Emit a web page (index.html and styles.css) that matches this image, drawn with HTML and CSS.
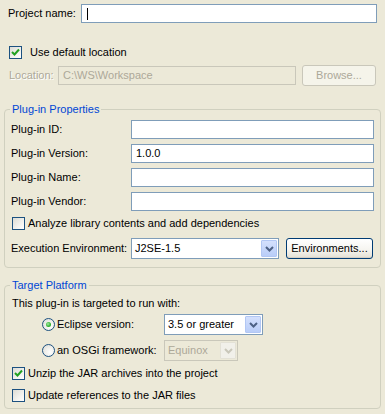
FILE: index.html
```html
<!DOCTYPE html>
<html>
<head>
<meta charset="utf-8">
<title>New Plug-in from Existing JAR Archives</title>
<link rel="stylesheet" href="styles.css">
</head>
<body>
<div class="top">
  <div class="row r-project">
    <span class="lbl-project">Project name:</span>
    <div class="field grow caret-host"><span class="caret"></span></div>
  </div>
  <div class="row r-default">
    <span class="check check-top checked"><svg viewBox="0 0 11 11" width="11" height="11"><polyline points="2,5 4.5,7.5 9,2.5" fill="none" stroke="#21a121" stroke-width="2"/></svg></span>
    <span class="ctext-wide">Use default location</span>
  </div>
  <div class="row r-location">
    <span class="lbl-location disabled-text">Location:</span>
    <div class="field field-disabled loc">C:\WS\Workspace</div>
    <div class="btn btn-disabled browse">Browse...</div>
  </div>
</div>

<fieldset class="group g1">
  <legend>Plug-in Properties</legend>
  <div class="row prop r-first">
    <span class="plbl">Plug-in ID:</span>
    <div class="field grow"></div>
  </div>
  <div class="row prop">
    <span class="plbl">Plug-in Version:</span>
    <div class="field grow">1.0.0</div>
  </div>
  <div class="row prop">
    <span class="plbl">Plug-in Name:</span>
    <div class="field grow"></div>
  </div>
  <div class="row prop">
    <span class="plbl">Plug-in Vendor:</span>
    <div class="field grow"></div>
  </div>
  <div class="row r-analyze">
    <span class="check"></span>
    <span class="ctext">Analyze library contents and add dependencies</span>
  </div>
  <div class="row r-exec">
    <span class="plbl">Execution Environment:</span>
    <div class="combo exec-combo">
      <span class="combo-text">J2SE-1.5</span>
      <span class="arrow"><svg viewBox="0 0 9 6" width="9" height="6"><polyline points="1,1 4.5,4.5 8,1" fill="none" stroke="#4d6185" stroke-width="2"/></svg></span>
    </div>
    <div class="btn btn-default envs">Environments...</div>
  </div>
</fieldset>

<fieldset class="group g2">
  <legend>Target Platform</legend>
  <div class="row r-intro">This plug-in is targeted to run with:</div>
  <div class="row r-eclipse">
    <span class="radio selected"><span class="dot"></span></span>
    <span class="rtext">Eclipse version:</span>
    <div class="combo eclipse-combo">
      <span class="combo-text">3.5 or greater</span>
      <span class="arrow"><svg viewBox="0 0 9 6" width="9" height="6"><polyline points="1,1 4.5,4.5 8,1" fill="none" stroke="#4d6185" stroke-width="2"/></svg></span>
    </div>
  </div>
  <div class="row r-osgi">
    <span class="radio"></span>
    <span class="rtext">an OSGi framework:</span>
    <div class="combo combo-disabled osgi-combo">
      <span class="combo-text">Equinox</span>
      <span class="arrow"><svg viewBox="0 0 9 6" width="9" height="6"><polyline points="1,1 4.5,4.5 8,1" fill="none" stroke="#c9c7ba" stroke-width="2"/></svg></span>
    </div>
  </div>
  <div class="row r-unzip">
    <span class="check checked"><svg viewBox="0 0 11 11" width="11" height="11"><polyline points="2,5 4.5,7.5 9,2.5" fill="none" stroke="#21a121" stroke-width="2"/></svg></span>
    <span class="ctext">Unzip the JAR archives into the project</span>
  </div>
  <div class="row r-update">
    <span class="check"></span>
    <span class="ctext">Update references to the JAR files</span>
  </div>
</fieldset>
</body>
</html>
```

FILE: styles.css
```css
* { box-sizing: border-box; }
html, body { margin: 0; padding: 0; }
body {
  background: #ece9d8;
  font: 11px/13px "Liberation Sans", Arial, sans-serif;
  color: #000;
  width: 385px;
  height: 414px;
  overflow: hidden;
}
.top { padding: 4px 8px 0; }
.row { display: flex; align-items: center; white-space: nowrap; }
.grow { flex: 1; }

.field {
  height: 19px;
  border: 1px solid #7f9db9;
  background: #fff;
  padding: 0 4px;
  line-height: 17px;
}
.field-disabled {
  border-color: #c9c7ba;
  background: #ece9d8;
  color: #aca899;
}
.disabled-text { color: #aca899; text-shadow: 1px 1px 0 #fff; }

.caret-host { position: relative; }
.caret {
  position: absolute;
  left: 5px;
  top: 3px;
  width: 1px;
  height: 12px;
  background: #000;
}

.r-project { height: 19px; }
.lbl-project { width: 73px; }

.r-default { height: 13px; margin-top: 23px; }
.check-top { margin-left: 1px; }
.ctext-wide { margin-left: 8px; }

.r-location { height: 21px; margin-top: 6px; }
.lbl-location { width: 50px; padding-left: 1px; }
.loc { width: 238px; padding-left: 4px; }

.btn {
  height: 21px;
  border-radius: 3px;
  text-align: center;
  line-height: 19px;
}
.btn-disabled {
  border: 1px solid #c9c7ba;
  background: #f5f4ea;
  color: #aca899;
}
.browse { width: 74px; margin-left: 6px; }
.btn-default {
  border: 1px solid #003c74;
  background: linear-gradient(#ffffff 0%, #f6f5f0 55%, #e3e0d4 100%);
  box-shadow: inset 0 -1px 0 #d6d0c5;
}
.envs { width: 87px; margin-left: 7px; }

/* checkbox */
.check {
  flex: none;
  width: 13px;
  height: 13px;
  border: 1px solid #1c5180;
  background: linear-gradient(135deg, #dcdcd5 0%, #f2f2ef 60%, #ffffff 100%);
  display: flex;
  align-items: center;
  justify-content: center;
}
.check svg { display: block; }
.ctext { margin-left: 3px; }

/* radio */
.radio {
  flex: none;
  width: 13px;
  height: 13px;
  border-radius: 50%;
  border: 1px solid #1c5180;
  background: radial-gradient(circle at 65% 65%, #ffffff 0%, #f0f0ec 45%, #d8d8d2 100%);
  display: flex;
  align-items: center;
  justify-content: center;
  margin-left: 31px;
}
.dot {
  width: 5px;
  height: 5px;
  border-radius: 50%;
  background: radial-gradient(circle at 40% 40%, #a4e8a4 0%, #2fb12f 60%, #1f931f 100%);
}
.rtext { margin-left: 2px; width: 107px; }

/* combo */
.combo {
  height: 21px;
  border: 1px solid #7f9db9;
  background: #fff;
  display: flex;
  align-items: stretch;
  padding: 1px;
}
.combo-text { flex: 1; padding-left: 2px; line-height: 17px; }
.arrow {
  width: 16px;
  background: linear-gradient(#d4e0fd, #b9cdf8);
  border: 1px solid #b2c7f4;
  border-radius: 1px;
  display: flex;
  align-items: center;
  justify-content: center;
}
.combo-disabled { border-color: #c9c7ba; background: #ece9d8; color: #aca899; }
.combo-disabled .arrow { background: #f1f0ea; border-color: #e3e1d6; }

.exec-combo { width: 148px; }
.eclipse-combo { width: 99px; }
.osgi-combo { width: 74px; }

/* groups */
.group {
  margin: 0 4px;
  padding: 4px 6px 8px;
  border: 1px solid #d0d0bf;
  border-radius: 4px;
  min-width: 0;
}
.group legend {
  padding: 0 2px;
  margin-left: -1px;
  color: #0046d5;
  line-height: 13px;
  height: 13px;
}
.g1 { margin-top: 17px; }
.g2 { margin-top: 11px; padding-top: 5px; padding-bottom: 6px; }

.prop { height: 19px; margin-top: 5px; }
.r-first { margin-top: 0; }
.plbl { width: 120px; }
.r-analyze { height: 13px; margin-top: 6px; padding-left: 1px; }
.r-exec { height: 21px; margin-top: 8px; }

.r-intro { height: 13px; padding-left: 1px; }
.r-eclipse { height: 21px; margin-top: 4px; }
.r-osgi { height: 21px; margin-top: 5px; }
.r-unzip { height: 13px; margin-top: 6px; padding-left: 1px; }
.r-update { height: 13px; margin-top: 9px; padding-left: 1px; }
```
